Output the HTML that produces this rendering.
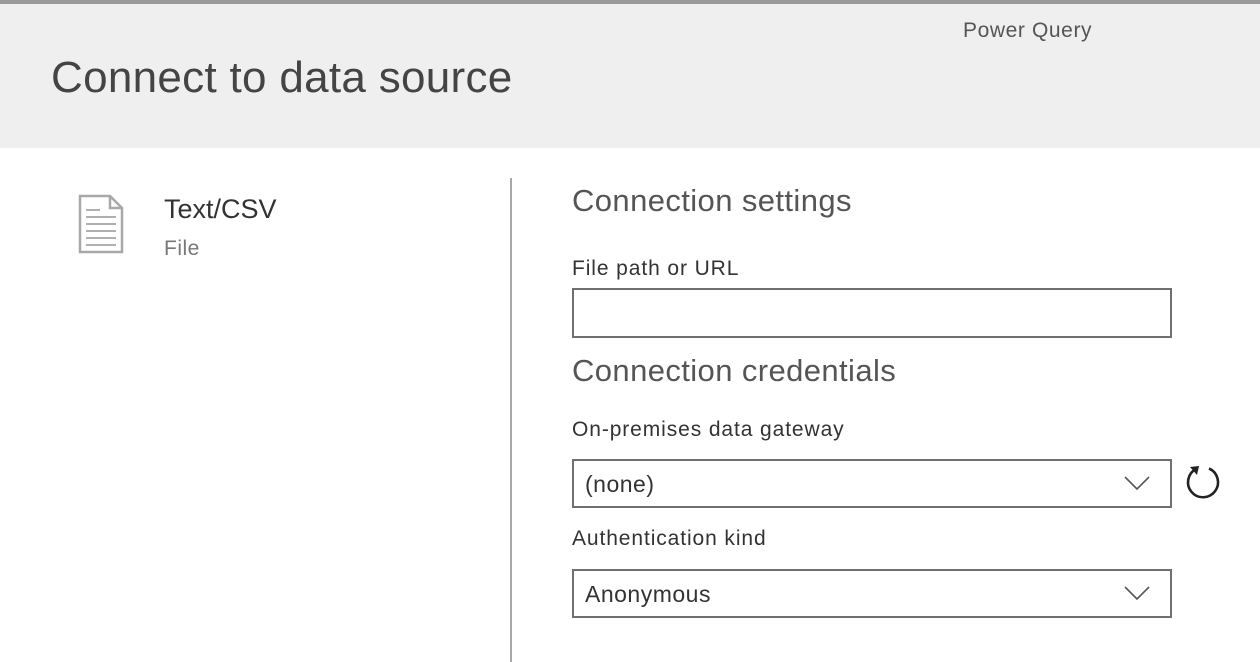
<!DOCTYPE html>
<html><head><meta charset="utf-8"><style>
*{margin:0;padding:0;box-sizing:border-box}
body{width:1260px;height:662px;background:#fff;font-family:"Liberation Sans",sans-serif;position:relative;overflow:hidden;color:#333}
.top{position:absolute;left:0;top:0;width:1260px;height:4px;background:#9a9a9a}
.hdr{position:absolute;left:0;top:4px;width:1260px;height:144px;background:#efefef}
.t{position:absolute;white-space:nowrap}
.box{position:absolute;border:2px solid #707070;background:#fff}
.chev{position:absolute;right:20px;top:14px}
</style></head><body>
<div class="top"></div>
<div class="hdr"></div>
<div class="t" style="left:963px;top:19px;font-size:21px;letter-spacing:0.6px;color:#555">Power Query</div>
<div class="t" style="left:51px;top:53px;font-size:44px;letter-spacing:0.3px;color:#444">Connect to data source</div>
<svg style="position:absolute;left:78px;top:194px" width="46" height="60" viewBox="0 0 46 60">
<path d="M2 2H32L44 14V58H2Z" fill="#fff" stroke="#a8a8a8" stroke-width="2.5"/>
<path d="M32 2V14H44" fill="none" stroke="#a8a8a8" stroke-width="2.5"/>
<g stroke="#b0b0b0" stroke-width="2"><line x1="8" y1="16" x2="22" y2="16"/><line x1="8" y1="23" x2="38" y2="23"/><line x1="8" y1="30" x2="38" y2="30"/><line x1="8" y1="37" x2="38" y2="37"/><line x1="8" y1="44" x2="38" y2="44"/><line x1="8" y1="51" x2="38" y2="51"/></g>
</svg>
<div class="t" style="left:164px;top:194px;font-size:27px;color:#333">Text/CSV</div>
<div class="t" style="left:164px;top:237px;font-size:21px;letter-spacing:0.5px;color:#777">File</div>
<div style="position:absolute;left:510px;top:178px;width:2px;height:484px;background:#a8a8a8"></div>
<div class="t" style="left:572px;top:183px;font-size:31px;letter-spacing:0.4px;color:#555">Connection settings</div>
<div class="t" style="left:572px;top:257px;font-size:21px;letter-spacing:0.9px;color:#333">File path or URL</div>
<div class="box" style="left:572px;top:288px;width:600px;height:50px"></div>
<div class="t" style="left:572px;top:353px;font-size:31px;letter-spacing:0.4px;color:#555">Connection credentials</div>
<div class="t" style="left:572px;top:418px;font-size:21px;letter-spacing:0.9px;color:#333">On-premises data gateway</div>
<div class="box" style="left:572px;top:459px;width:600px;height:49px"><div class="t" style="left:11px;top:10px;font-size:23px;letter-spacing:0.5px;color:#333">(none)</div>
<svg class="chev" width="26" height="16"><path d="M1 2L13 14L25 2" fill="none" stroke="#555" stroke-width="1.6"/></svg></div>
<svg style="position:absolute;left:1184px;top:463px" width="40" height="40" viewBox="0 0 40 40"><path d="M25 5.5A15 15 0 1 1 12 6" fill="none" stroke="#222" stroke-width="2.6"/><path d="M6 4L15 3L13 12Z" fill="#222"/></svg>
<div class="t" style="left:572px;top:527px;font-size:21px;letter-spacing:0.9px;color:#333">Authentication kind</div>
<div class="box" style="left:572px;top:569px;width:600px;height:49px"><div class="t" style="left:11px;top:10px;font-size:23px;letter-spacing:0.5px;color:#333">Anonymous</div>
<svg class="chev" width="26" height="16"><path d="M1 2L13 14L25 2" fill="none" stroke="#555" stroke-width="1.6"/></svg></div>
</body></html>
